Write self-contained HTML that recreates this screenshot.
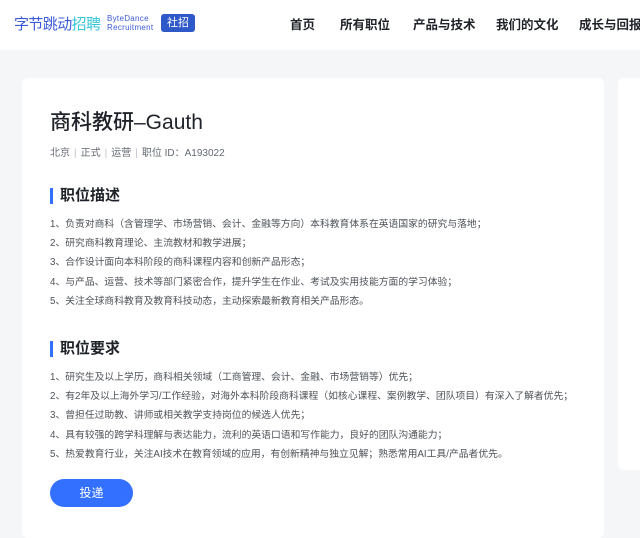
<!DOCTYPE html>
<html><head><meta charset="utf-8"><style>
*{margin:0;padding:0;box-sizing:border-box}
body{width:640px;height:523px;overflow:hidden;background:#f5f6f8;font-family:"Liberation Sans","Noto Sans CJK SC",sans-serif;position:relative}
.hdr{position:absolute;left:0;top:0;width:640px;height:50px;background:#fff}
.logo{position:absolute;left:14px;top:13px;font-size:15px;color:#3c5bd8;letter-spacing:-0.6px;white-space:nowrap}
.logo span{color:#39c6d8}
.bd{position:absolute;left:107px;top:14px;font-size:8px;line-height:9px;color:#3c5bd8;letter-spacing:0.3px}
.tag{position:absolute;left:161px;top:14px;width:34px;height:18px;background:#2f58c8;color:#fff;border-radius:3px;font-size:11px;text-align:center;line-height:18px}
.nav{position:absolute;top:14px;font-size:12.5px;color:#1f2329;font-weight:bold;white-space:nowrap}
.card{position:absolute;left:22px;top:78px;width:582px;height:460px;background:#fff;border-radius:6px}
.card2{position:absolute;left:618px;top:78px;width:40px;height:392px;background:#fff;border-radius:6px}
h1{position:absolute;left:50px;top:106px;font-size:21px;font-weight:500;color:#1f2329;white-space:nowrap}
.meta{position:absolute;left:50px;top:144px;font-size:10px;color:#646a73;white-space:nowrap}
.meta i{font-style:normal;color:#c0c4cc;margin:0 4px}
.h2{position:absolute;left:50px;font-size:15px;font-weight:bold;color:#1f2329;padding-left:7px;border-left:3px solid #3370ff;line-height:16px}
.li{position:absolute;left:50px;font-size:9.8px;color:#4e5358;white-space:nowrap}
.btn{position:absolute;left:50px;top:479px;width:83px;height:28px;background:#3370ff;border-radius:14px;color:#fff;font-size:12px;text-align:center;line-height:28px}
</style></head><body>
<div class="hdr">
<div class="logo">字节跳动<span>招聘</span></div>
<div class="bd">ByteDance<br>Recruitment</div>
<div class="tag">社招</div>
<div class="nav" style="left:290px">首页</div>
<div class="nav" style="left:340px">所有职位</div>
<div class="nav" style="left:413px">产品与技术</div>
<div class="nav" style="left:496px">我们的文化</div>
<div class="nav" style="left:579px">成长与回报</div>
</div>
<div class="card"></div><div class="card2"></div>
<h1>商科教研–Gauth</h1>
<div class="meta">北京<i>|</i>正式<i>|</i>运营<i>|</i>职位 ID：A193022</div>
<div class="h2" style="top:188px">职位描述</div>
<div class="li" style="top:216px">1、负责对商科（含管理学、市场营销、会计、金融等方向）本科教育体系在英语国家的研究与落地；</div>
<div class="li" style="top:235px">2、研究商科教育理论、主流教材和教学进展；</div>
<div class="li" style="top:254px">3、合作设计面向本科阶段的商科课程内容和创新产品形态；</div>
<div class="li" style="top:274px">4、与产品、运营、技术等部门紧密合作，提升学生在作业、考试及实用技能方面的学习体验；</div>
<div class="li" style="top:293px">5、关注全球商科教育及教育科技动态，主动探索最新教育相关产品形态。</div>
<div class="h2" style="top:341px">职位要求</div>
<div class="li" style="top:369px">1、研究生及以上学历，商科相关领域（工商管理、会计、金融、市场营销等）优先；</div>
<div class="li" style="top:388px">2、有2年及以上海外学习/工作经验，对海外本科阶段商科课程（如核心课程、案例教学、团队项目）有深入了解者优先；</div>
<div class="li" style="top:407px">3、曾担任过助教、讲师或相关教学支持岗位的候选人优先；</div>
<div class="li" style="top:427px">4、具有较强的跨学科理解与表达能力，流利的英语口语和写作能力，良好的团队沟通能力；</div>
<div class="li" style="top:446px">5、热爱教育行业，关注AI技术在教育领域的应用，有创新精神与独立见解；熟悉常用AI工具/产品者优先。</div>
<div class="btn">投递</div>
</body></html>
